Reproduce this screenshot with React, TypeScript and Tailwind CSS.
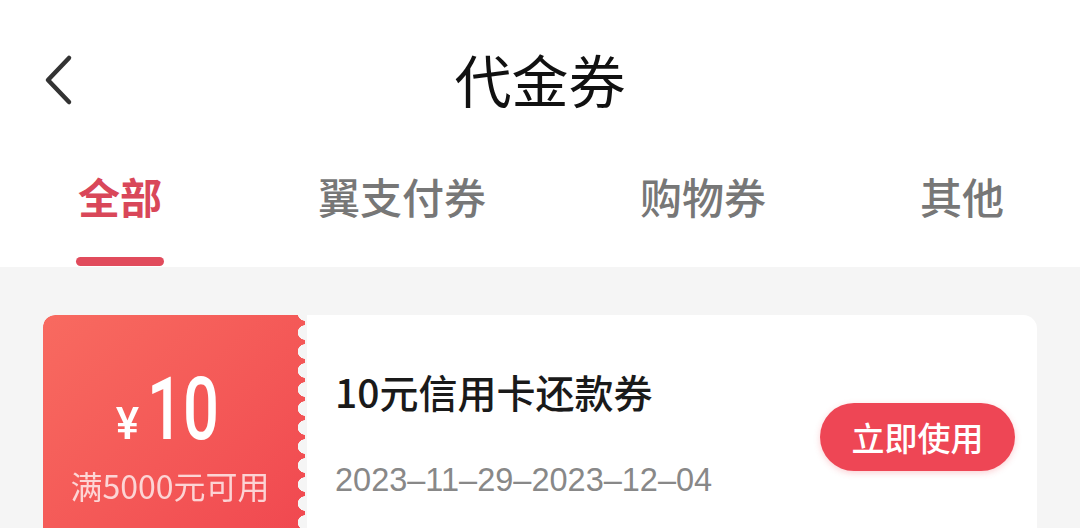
import React from "react";

const CJK = '"Noto Sans CJK SC", "Noto Sans", sans-serif';

export default function App() {
  return (
    <div
      className="w-[1080px] h-[528px] overflow-hidden bg-[#f5f5f5] flex flex-col"
      style={{ fontFamily: CJK }}
    >
      <div className="bg-white h-[267px] flex flex-col shrink-0">
        <div className="h-[156px] flex items-center px-[40px]">
          <svg width="40" height="56" viewBox="0 0 40 56" className="mt-[4px]">
            <path
              d="M29 6 L8 28 L29 50"
              fill="none"
              stroke="#333"
              strokeWidth="4.5"
              strokeLinecap="round"
              strokeLinejoin="round"
            />
          </svg>
          <div className="flex-1 flex justify-center pr-[40px]">
            <span className="text-[57px] leading-none text-[#111]">代金券</span>
          </div>
        </div>
        <div className="flex justify-between px-[76px] mt-[14px]">
          <div className="flex flex-col items-center">
            <span className="text-[42px] leading-none font-bold text-[#d94759] h-[52px] flex items-center">全部</span>
            <div className="w-[88px] h-[9px] rounded-full bg-[#e14b5c] mt-[35px]" />
          </div>
          <span className="text-[42px] leading-none font-medium text-[#777] h-[52px] flex items-center">翼支付券</span>
          <span className="text-[42px] leading-none font-medium text-[#777] h-[52px] flex items-center">购物券</span>
          <span className="text-[42px] leading-none font-medium text-[#777] h-[52px] flex items-center">其他</span>
        </div>
      </div>

      <div className="flex mx-[43px] mt-[48px] h-[240px] shrink-0">
        <div
          className="w-[262px] rounded-l-[12px] bg-gradient-to-br from-[#f86a60] to-[#f0464f] flex flex-col items-center pt-[50px] pr-[12px] [mask:radial-gradient(circle_at_100%_50%,transparent_7px,#000_7.5px)_0_8px/100%_19px_repeat-y] [-webkit-mask:radial-gradient(circle_at_100%_50%,transparent_7px,#000_7.5px)_0_8px/100%_19px_repeat-y]"
        >
          <div className="flex items-baseline text-white">
            <span className="text-[44px] leading-none font-medium mr-[8px]" style={{ fontFamily: "Roboto, sans-serif" }}>¥</span>
            <span
              className="text-[88px] leading-none font-medium inline-block scale-x-[0.72] origin-left mr-[-27px]"
              style={{ fontFamily: "Roboto, sans-serif" }}
            >
              10
            </span>
          </div>
          <span className="text-[32px] leading-none text-white/75 mt-[16px] ml-[4px]">满5000元可用</span>
        </div>
        <div className="flex-1 ml-[2px] bg-white rounded-r-[14px] flex items-start pl-[28px] pr-[22px]">
          <div className="flex flex-col flex-1 pt-[57px]">
            <span className="text-[39px] leading-none font-medium text-[#1a1a1a]">10元信用卡还款券</span>
            <span
              className="text-[32.5px] leading-none text-[#888] mt-[53px]"
              style={{ fontFamily: '"Liberation Sans", Arial, sans-serif' }}
            >
              2023–11–29–2023–12–04
            </span>
          </div>
          <div className="mt-[88px] w-[195px] h-[68px] rounded-full bg-[#ee4655] flex items-center justify-center shadow-[0_2px_6px_rgba(238,70,85,0.25)]">
            <span className="text-[33px] leading-none font-medium text-white">立即使用</span>
          </div>
        </div>
      </div>
    </div>
  );
}
